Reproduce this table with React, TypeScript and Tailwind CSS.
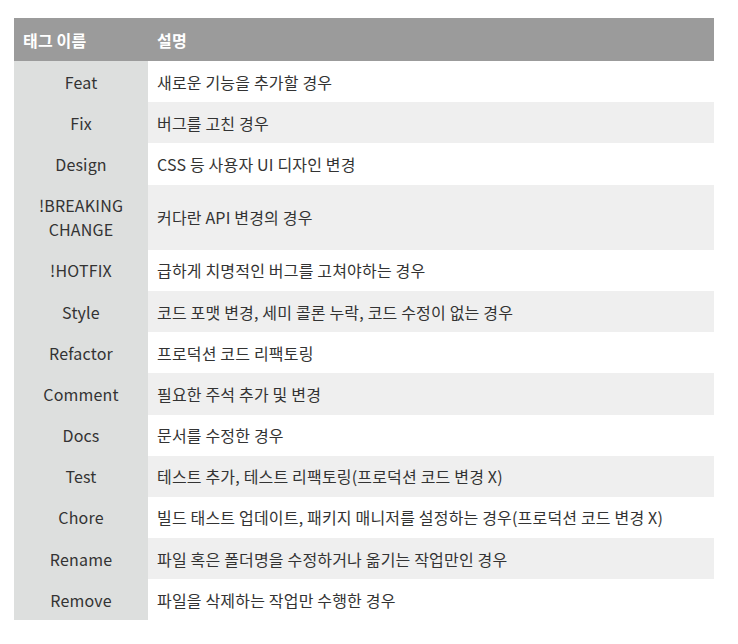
const rows: [string[], string][] = [
  [["Feat"], "새로운 기능을 추가할 경우"],
  [["Fix"], "버그를 고친 경우"],
  [["Design"], "CSS 등 사용자 UI 디자인 변경"],
  [["!BREAKING", "CHANGE"], "커다란 API 변경의 경우"],
  [["!HOTFIX"], "급하게 치명적인 버그를 고쳐야하는 경우"],
  [["Style"], "코드 포맷 변경, 세미 콜론 누락, 코드 수정이 없는 경우"],
  [["Refactor"], "프로덕션 코드 리팩토링"],
  [["Comment"], "필요한 주석 추가 및 변경"],
  [["Docs"], "문서를 수정한 경우"],
  [["Test"], "테스트 추가, 테스트 리팩토링(프로덕션 코드 변경 X)"],
  [["Chore"], "빌드 태스트 업데이트, 패키지 매니저를 설정하는 경우(프로덕션 코드 변경 X)"],
  [["Rename"], "파일 혹은 폴더명을 수정하거나 옮기는 작업만인 경우"],
  [["Remove"], "파일을 삭제하는 작업만 수행한 경우"],
];

export default function App() {
  return (
    <div className="min-h-screen bg-white pt-[18px] pl-[14px] font-['Noto_Sans_CJK_KR',sans-serif] text-[16px] leading-[24px] tracking-[0.18px] text-[#333]">
      <table className="w-[700px] border-collapse">
        <thead>
          <tr className="bg-[#9b9b9b] text-white">
            <th className="w-[134px] py-[9.5px] pl-[9px] text-left font-bold">태그 이름</th>
            <th className="py-[9.5px] pl-[9px] text-left font-bold">설명</th>
          </tr>
        </thead>
        <tbody>
          {rows.map(([tag, desc], i) => (
            <tr key={i}>
              <td className="bg-[#dddfde] py-[8.6px] text-center">
                {tag.map((t) => (
                  <div key={t}>{t}</div>
                ))}
              </td>
              <td className={i % 2 === 1 ? "bg-[#efefef] py-[8.6px] pl-[9px]" : "bg-white py-[8.6px] pl-[9px]"}>
                {desc}
              </td>
            </tr>
          ))}
        </tbody>
      </table>
    </div>
  );
}
